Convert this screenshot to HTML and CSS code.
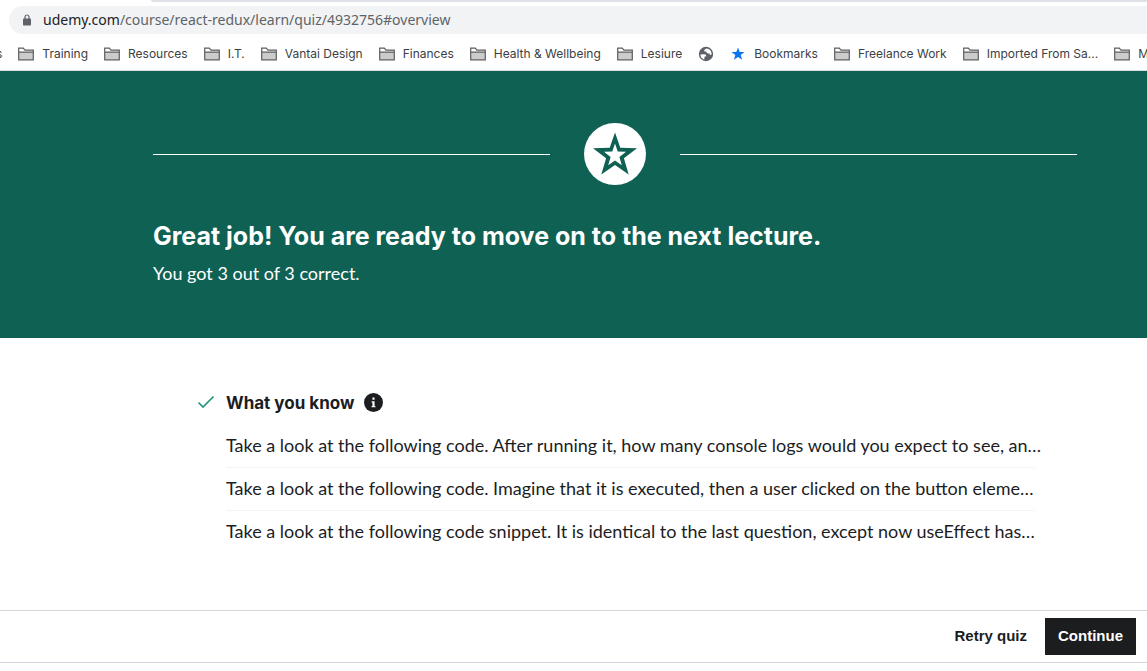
FILE: index.html
```html
<!DOCTYPE html>
<html lang="en">
<head>
<meta charset="utf-8">
<meta name="viewport" content="width=device-width, initial-scale=1">
<title>Quiz results</title>
<link rel="stylesheet" href="styles.css">
</head>
<body>
<svg class="sprite" aria-hidden="true">
  <symbol id="folder" viewBox="0 0 16 14">
    <path d="M.7 12.8V1.2h4.6l1.6 2h8.4v9.6z" fill="#fff"/>
    <path d="M1 5h14v7.5H1z" fill="#ccc"/>
    <path d="M.7 12.8V1.2h4.6l1.6 2h8.4v9.6zM1 5.2h14" fill="none" stroke="#5c5c5e" stroke-width="1.2"/>
  </symbol>
</svg>
<header class="browser">
  <div class="tab-edge"></div>
  <div class="address">
    <svg class="lock" viewBox="0 0 8 12" aria-hidden="true"><path d="M2 5V3a2 2 0 0 1 4 0v2" fill="none" stroke="#5f6368" stroke-width="1.2"/><rect y="4.5" width="8" height="7" rx=".8" fill="#5f6368"/></svg>
    <span class="url"><span class="domain">udemy.com</span>/course/react-redux/learn/quiz/4932756#overview</span>
  </div>
  <nav class="bookmarks" aria-label="Bookmarks">
    <a class="bookmark" href="#">s</a>
    <a class="bookmark" href="#"><svg class="folder"><use href="#folder"/></svg>Training</a>
    <a class="bookmark" href="#"><svg class="folder"><use href="#folder"/></svg>Resources</a>
    <a class="bookmark" href="#"><svg class="folder"><use href="#folder"/></svg>I.T.</a>
    <a class="bookmark" href="#"><svg class="folder"><use href="#folder"/></svg>Vantai Design</a>
    <a class="bookmark" href="#"><svg class="folder"><use href="#folder"/></svg>Finances</a>
    <a class="bookmark" href="#"><svg class="folder"><use href="#folder"/></svg>Health &amp; Wellbeing</a>
    <a class="bookmark" href="#"><svg class="folder"><use href="#folder"/></svg>Lesiure</a>
    <a class="bookmark" href="#" aria-label="Website"><svg class="mark" viewBox="0 0 16 16"><circle cx="8" cy="8" r="7.2" fill="#5f6368"/><path d="M2.4 8.4 6.2 8.2c1.5 0 2.1.8 2 2l-1.7.6-.2 2.8C3.9 12.800 2.400 10.700 2.400 8.400z" fill="#fff"/><path d="M8.300 2.400 6.300 4.100 6.400 5.400 8.200 5.600 9.100 7.300 11.500 7.500 11.800 8.900 13.600 8.500C13.800 5 11.600 2.600 8.300 2.400z" fill="#fff"/></svg></a>
    <a class="bookmark" href="#"><svg class="mark" viewBox="0 0 16 16"><path d="m8 1.400 1.700 4.500 4.900.2-3.900 3 1.400 4.700L8 11.100l-4.100 2.700 1.400-4.700-3.900-3 4.900-.2z" fill="#0b74ee"/></svg>Bookmarks</a>
    <a class="bookmark" href="#"><svg class="folder"><use href="#folder"/></svg>Freelance Work</a>
    <a class="bookmark" href="#"><svg class="folder"><use href="#folder"/></svg>Imported From Sa...</a>
    <a class="bookmark" href="#"><svg class="folder"><use href="#folder"/></svg>M</a>
  </nav>
</header>
<main class="quiz">
  <section class="result">
    <div class="divider">
      <svg class="badge" viewBox="0 0 62 62" aria-hidden="true"><circle cx="31" cy="31" r="31" fill="#fff"/><path fill="#0f6154" fill-rule="evenodd" d="M31 9.500 36.300 24.800 53 25.200 39.900 35.200 44.700 51.500 31 42 17.300 51.500 22.100 35.200 9 25.200 25.700 24.800zM31 20.500 28.300 28.500 20 28.800 26.600 34 24.200 42.200 31 37.500 37.800 42.200 35.400 34 42 28.800 33.700 28.500z"/></svg>
    </div>
    <h1 class="title">Great job! You are ready to move on to the next lecture.</h1>
    <p class="score">You got 3 out of 3 correct.</p>
  </section>
  <section class="known">
    <svg class="check" viewBox="0 0 18 18" aria-hidden="true"><path d="m1.500 9.500 4.500 4.500L16.500 3.500" fill="none" stroke="#1e947f" stroke-width="1.600"/></svg>
    <div class="known-body">
      <h2 class="known-title">What you know
        <svg class="info" viewBox="0 0 18 18" role="img" aria-label="Information"><circle cx="9" cy="9" r="9" fill="#1c1d1f"/><path d="M8 4.300h2v2H8zM7.200 7.800H10v4.400h.8V13.500H7.200v-1.300H8V9h-.8z" fill="#fff"/></svg>
      </h2>
      <ul class="questions">
        <li class="question">Take a look at the following code. After running it, how many console logs would you expect to see, an…</li>
        <li class="question">Take a look at the following code. Imagine that it is executed, then a user clicked on the button eleme…</li>
        <li class="question">Take a look at the following code snippet. It is identical to the last question, except now useEffect has…</li>
      </ul>
    </div>
  </section>
</main>
<footer class="actions">
  <button class="button" type="button">Retry quiz</button>
  <button class="button primary" type="button">Continue</button>
</footer>
</body>
</html>
```
FILE: styles.css
```css
* { box-sizing: border-box; }
body {
  margin: 0;
  min-height: 100vh;
  display: flex;
  flex-direction: column;
  padding-bottom: 8px;
  overflow-x: hidden;
  background: #fff;
  color: #1c1d1f;
  font-family: Lato, Arial, sans-serif;
}
h1, h2, p, ul { margin: 0; padding: 0; }
.sprite { display: none; }
.browser { border-bottom: 1px solid #d9dcdf; overflow: hidden; }
.tab-edge { height: 2px; margin-left: 151px; background: #dee1e6; border-bottom-left-radius: 2px; }
.address {
  display: flex;
  align-items: center;
  gap: 12px;
  height: 28px;
  margin: 4px 0 0 9px;
  padding-left: 14px;
  border-radius: 14px 0 0 14px;
  background: #f1f3f4;
}
.lock { width: 8px; height: 12px; }
.url { font: 14px/20px "Noto Sans", sans-serif; color: #5f6368; }
.domain { color: #202124; }
.bookmarks { display: flex; gap: 16px; height: 36px; padding-top: 4px; margin-left: -4px; }
.bookmark {
  display: flex;
  flex: none;
  align-items: center;
  gap: 8px;
  color: #3c4043;
  font: 12px/16px Inter, sans-serif;
  text-decoration: none;
}
.folder { width: 16px; height: 14px; }
.mark { width: 16px; height: 16px; }
.quiz { flex: 1; }
.result {
  padding: 52px 70px 53px 153px;
  background: #0f6154;
  color: #fff;
}
.divider { display: flex; align-items: center; gap: 34px; }
.divider::before, .divider::after { content: ""; flex: 1; height: 1px; background: #fff; }
.badge { width: 62px; height: 62px; }
.title { margin-top: 34px; font: bold 25px/34px Inter, sans-serif; }
.score { margin-top: 8px; font-size: 18px; line-height: 24px; }
.known { display: flex; gap: 11px; padding: 53px 112px 0 197px; }
.check { flex: none; width: 18px; height: 18px; margin-top: 2px; }
.known-body { flex: 1; min-width: 0; }
.known-title { display: flex; align-items: center; gap: 10px; font: bold 17px/24px Inter, sans-serif; }
.info { width: 19px; height: 19px; margin-bottom: 2px; }
.questions { margin-top: 10px; list-style: none; }
.question {
  padding: 8px 0 10px;
  border-bottom: 1px solid #f4f4f5;
  font-size: 18px;
  line-height: 24px;
  white-space: nowrap;
}
.question:last-child { border-bottom: 0; }
.actions {
  display: flex;
  justify-content: flex-end;
  gap: 5px;
  padding: 7px 11px;
  border: solid #d1d7dc;
  border-width: 1px 0;
}
.button {
  height: 37px;
  padding: 0 13px 2px;
  border: 0;
  background: none;
  color: #1c1d1f;
  font: bold 15px/20px "Liberation Sans", Arial, sans-serif;
}
.primary { background: #1c1d1f; color: #fff; }
```
